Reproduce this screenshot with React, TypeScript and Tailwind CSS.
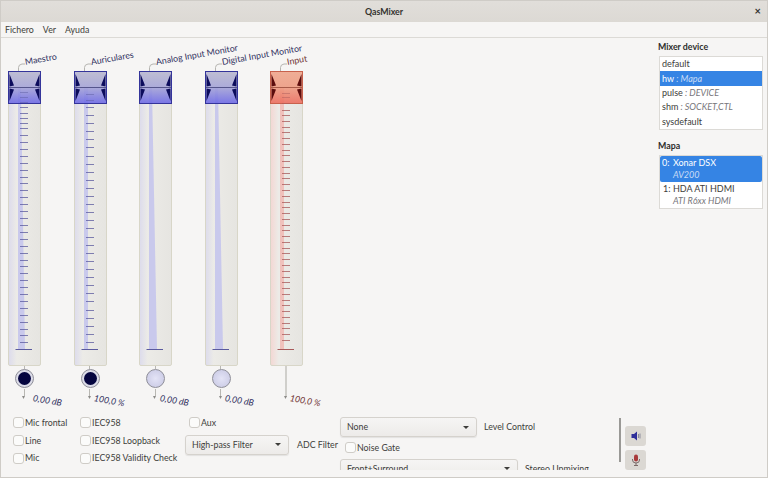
const font = 'font-["Lato","Noto_Sans",sans-serif]';

type Channel = {
  name: string;
  value: string;
  red?: boolean;
  ticks?: number[];
  barTop: number;
  barBottom: number;
  muted: boolean;
  valueClass: string;
};

const rangeTicks = (from: number, to: number, step: number) => {
  const out: number[] = [];
  for (let y = from; y <= to; y += step) out.push(Math.round(y));
  return out;
};

const masterTicks = [
  92, 97, 102, 107, 113, 118, 123, 128, 135, 142, 149, 156, 163, 170, 177, 183, 190, 197, 204, 211, 218, 225, 232, 239,
  246, 253, 260, 266, 273, 280, 287, 294, 301, 308, 315, 322, 329, 335, 342,
];
const phoneTicks = [94, 100, ...rangeTicks(107, 342, 8.1)];
const inputTicks = [93, 97, 103, 110, ...rangeTicks(115, 342, 5.77)];

const channels: Channel[] = [
  { name: 'Maestro', value: '0,00 dB', ticks: masterTicks, barTop: 13, barBottom: 17, muted: true, valueClass: 'left-[25px]' },
  { name: 'Auriculares', value: '100,0 %', ticks: phoneTicks, barTop: 14, barBottom: 14, muted: true, valueClass: 'left-[20px]' },
  { name: 'Analog Input Monitor', value: '0,00 dB', barTop: 13, barBottom: 18, muted: false, valueClass: 'left-[21px]' },
  { name: 'Digital Input Monitor', value: '0,00 dB', barTop: 13, barBottom: 18, muted: false, valueClass: 'left-[20px]' },
  { name: 'Input', value: '100,0 %', red: true, ticks: inputTicks, barTop: 14, barBottom: 14, muted: false, valueClass: 'left-[20px]' },
];

function Handle({ red }: { red?: boolean }) {
  const dark = red ? '#5c0d0d' : '#0c0c5c';
  return (
    <svg width="33" height="33" viewBox="0 0 33 33" className="absolute -left-px -top-px">
      <defs>
        <linearGradient id={red ? 'hr' : 'hb'} x1="0" y1="0" x2="0" y2="1">
          <stop offset="0" stopColor={red ? '#f0a68c' : '#b9b8d0'} />
          <stop offset="0.5" stopColor={red ? '#ee9a80' : '#a3a2d8'} />
          <stop offset="1" stopColor={red ? '#ec6a5c' : '#6a66e6'} />
        </linearGradient>
      </defs>
      <rect
        x="0.5"
        y="0.5"
        width="32"
        height="32"
        fill={`url(#${red ? 'hr' : 'hb'})`}
        fillOpacity="0.88"
        stroke={red ? '#c8614c' : '#34349a'}
      />
      <path
        d="M1.5 3L6 14.5L1.5 15.5ZM1.5 17.5L6 18.5L1.5 30ZM31.5 3L27 14.5L31.5 15.5ZM31.5 17.5L27 18.5L31.5 30Z"
        fill={dark}
      />
      <path d="M1 16.5H32" stroke={red ? '#a85a48' : '#55558c'} strokeWidth="1" />
    </svg>
  );
}

function Fader({ ch }: { ch: Channel }) {
  const ink = ch.red ? '#a85a5a' : '#5a5a9e';
  return (
    <div
      className={`relative h-[295px] w-[33px] rounded-b-[2px] border border-[#d8d6c8] bg-gradient-to-r ${
        ch.red ? 'from-[#f3d8d4]' : 'from-[#dddcec]'
      } via-[#ecebe7] via-25% to-[#e6e5e1]`}
    >
      <svg width="33" height="295" viewBox="0 0 33 295" className="absolute -left-px -top-px">
        <path d={`M10 17H${ch.barTop}L${ch.barBottom} 278H10Z`} fill={ch.red ? '#f0c2bc' : '#c9c9ec'} />
      </svg>
      <Handle red={ch.red} />
      <svg width="33" height="295" viewBox="0 0 33 295" className="absolute -left-px -top-px">
        {ch.ticks?.map((t) => (
          <line
            key={t}
            x1="12"
            x2="20"
            y1={t - 71 + 0.5}
            y2={t - 71 + 0.5}
            stroke={ink}
            strokeWidth="1"
            opacity={t < 104 ? 0.45 : 0.75}
          />
        ))}
        <line x1="7.5" x2="24" y1="278.5" y2="278.5" stroke={ink} strokeWidth="1" />
      </svg>
    </div>
  );
}

function Knob({ ch }: { ch: Channel }) {
  if (ch.red) {
    return <div className="ml-[15px] h-[31px] w-[2px] bg-[#d0cfcb]" />;
  }
  return (
    <div className="relative flex h-[31px] w-[33px] justify-center">
      <div className="absolute left-[15.5px] top-0 h-[3px] w-px bg-[#b8b7b2]" />
      <div
        className={`mt-[3px] flex h-[19px] w-[19px] items-center justify-center rounded-full border border-[#8e8e98] ${
          ch.muted ? 'bg-[#dcdce8]' : 'bg-[radial-gradient(circle,#e4e4f6,#c6c6e2)]'
        }`}
      >
        {ch.muted && <div className="h-[13px] w-[13px] rounded-full bg-[#05053f]" />}
      </div>
      <div className="absolute left-[15.5px] top-[23px] h-[7px] w-px bg-[#b8b7b2]" />
    </div>
  );
}

function Strip({ ch }: { ch: Channel }) {
  const ink = ch.red ? 'text-[#6e3030]' : 'text-[#30305e]';
  return (
    <div className="relative w-[33px] shrink-0">
      {/* rotated caption with its little hook */}
      <svg width="12" height="12" viewBox="0 0 12 12" className="absolute left-[10px] top-[-10px]">
        <path d="M0.5 10V6.5Q0.5 3.5 4 3H7" fill="none" stroke="#b5b4b0" />
      </svg>
      <span className={`absolute left-[17px] top-[-15px] origin-left -rotate-[10deg] whitespace-nowrap text-[8.8px] leading-[12px] ${ink}`}>
        {ch.name}
      </span>
      <Fader ch={ch} />
      <Knob ch={ch} />
      <div className="relative h-[14px]">
        <svg width="6" height="4" viewBox="0 0 6 4" className="absolute left-[13px] top-[-1px]">
          <path d="M1 0H4L2.5 3Z" fill="#8c8b88" />
        </svg>
        <span className={`absolute top-[-5px] origin-left rotate-[10deg] whitespace-nowrap text-[8.8px] italic leading-[12px] ${ch.valueClass} ${ink}`}>
          {ch.value}
        </span>
      </div>
    </div>
  );
}

function Check({ label, className = '' }: { label: string; className?: string }) {
  return (
    <label className={`flex h-[17.7px] items-center whitespace-nowrap text-[#3d3d3a] ${className}`}>
      <span className="mr-px h-[11px] w-[11px] shrink-0 rounded-[3px] border border-[#cfccc7] bg-[#fbfbfa]" />
      {label}
    </label>
  );
}

function Combo({ label, className }: { label: string; className: string }) {
  return (
    <div
      className={`flex h-[20px] shrink-0 items-center justify-between rounded-[3px] border border-[#d5d2cd] bg-gradient-to-b from-[#f6f5f4] to-[#edebe9] pl-[6px] pr-[7px] text-[#3d3d3a] shadow-[0_1px_1px_rgba(0,0,0,0.08)] ${className}`}
    >
      {label}
      <span className="h-0 w-0 border-x-[3.5px] border-t-[3.5px] border-x-transparent border-t-[#3d3d3a]" />
    </div>
  );
}

function SpeakerIcon() {
  return (
    <svg width="10" height="10" viewBox="0 0 10 10">
      <path d="M0.5 3H3L6 0.5V9.5L3 7H0.5Z" fill="#2f2f9a" />
      <path d="M7.5 3V7M9 2.5V7.5" stroke="#8e8e9e" />
    </svg>
  );
}

function MicIcon() {
  return (
    <svg width="10" height="12" viewBox="0 0 10 12">
      <rect x="3" y="0.5" width="4" height="7" rx="2" fill="#a83a3a" />
      <path d="M1.5 5V6Q1.5 9 5 9Q8.5 9 8.5 6V5M5 9V11.5M3 11.5H7" fill="none" stroke="#7a6a68" />
    </svg>
  );
}

export default function App() {
  return (
    <div
      className={`flex h-[478px] w-[768px] flex-col overflow-hidden border border-[#cfccc7] bg-[#f6f5f4] text-[8.8px] leading-[12px] ${font}`}
    >
      {/* Title bar */}
      <div className="relative flex h-[21px] shrink-0 items-center justify-center bg-gradient-to-b from-[#e1deda] to-[#dcd9d4] font-bold text-[#33322f]">
        QasMixer
        <span className="absolute right-[6px] top-[5px] text-[11px] leading-[10px]">×</span>
      </div>

      {/* Menu */}
      <div className="flex h-[16px] shrink-0 items-center gap-[9px] border-b border-[#dcdad6] pl-[4px] text-[#3d3d3a]">
        <span>Fichero</span>
        <span>Ver</span>
        <span>Ayuda</span>
      </div>

      <div className="flex min-h-0 flex-1">
        {/* Mixer area */}
        <div className="mb-[7px] min-w-0 flex-1 overflow-hidden pl-[7px] pt-[33px]">
          <div className="flex gap-[32.6px]">
            {channels.map((ch) => (
              <Strip key={ch.name} ch={ch} />
            ))}
          </div>

          <div className="mt-[3px] flex items-start">
            <div className="w-[72px] shrink-0 pl-[5px]">
              <Check label="Mic frontal" />
              <Check label="Line" />
              <Check label="Mic" />
            </div>
            <div className="w-[104px] shrink-0">
              <Check label="IEC958" />
              <Check label="IEC958 Loopback" />
              <Check label="IEC958 Validity Check" />
            </div>
            <div className="w-[156px] shrink-0">
              <Check label="Aux" className="pl-[5px]" />
              <div className="ml-px mt-[3px] flex items-center gap-[8px]">
                <Combo label="High-pass Filter" className="w-[104px]" />
                <span className="whitespace-nowrap text-[#3d3d3a]">ADC Filter</span>
              </div>
            </div>
            <div className="mt-[3px] w-[279px] shrink-0">
              <div className="flex items-center gap-[7px]">
                <Combo label="None" className="w-[137px]" />
                <span className="whitespace-nowrap text-[#3d3d3a]">Level Control</span>
              </div>
              <Check label="Noise Gate" className="mt-[2px] pl-[5px]" />
              <div className="mt-[2px] flex items-center gap-[7px]">
                <Combo label="Front+Surround" className="w-[178px]" />
                <span className="whitespace-nowrap text-[#3d3d3a]">Stereo Upmixing</span>
              </div>
            </div>
            <div className="mt-[4px] h-[44px] w-[2px] shrink-0 bg-[#9a9996]" />
            <div className="ml-[4px] mt-[12px] flex shrink-0 flex-col gap-[4px]">
              <button className="flex h-[20px] w-[21px] items-center justify-center rounded-[3px] bg-[#dbd8d3]">
                <SpeakerIcon />
              </button>
              <button className="flex h-[20px] w-[21px] items-center justify-center rounded-[3px] bg-[#dbd8d3]">
                <MicIcon />
              </button>
            </div>
          </div>
        </div>

        {/* Device column */}
        <div className="w-[109px] shrink-0 pr-[4px] pt-[3px] text-[#3d3d3a]">
          <div className="h-[15px] font-bold text-[#2e2e2c]">Mixer device</div>
          <div className="ml-px border border-[#dcdad6] bg-white text-[9px]">
            <div className="flex h-[14.4px] items-center pl-[2px]">default</div>
            <div className="flex h-[14.4px] items-center bg-[#3584e4] pl-[2px] text-white">
              hw<i className="text-[#c9dcf6]">&nbsp;: Mapa</i>
            </div>
            <div className="flex h-[14.4px] items-center pl-[2px]">
              pulse<i className="text-[#77767b]">&nbsp;: DEVICE</i>
            </div>
            <div className="flex h-[14.4px] items-center pl-[2px]">
              shm<i className="text-[#77767b]">&nbsp;: SOCKET,CTL</i>
            </div>
            <div className="flex h-[14.4px] items-center pl-[2px]">sysdefault</div>
          </div>
          <div className="mb-[3px] mt-[10px] font-bold text-[#2e2e2c]">Mapa</div>
          <div className="ml-px border border-[#dcdad6] bg-white text-[9px]">
            <div className="h-[26px] rounded-[2px] bg-[#3584e4] pl-[2px] pt-px text-white">
              <div className="flex">
                <span className="w-[11px]">0:</span>
                Xonar DSX
              </div>
              <div className="pl-[11px] italic text-[#c9dcf6]">AV200</div>
            </div>
            <div className="h-[26px] pl-[3px] pt-px">
              <div className="flex">
                <span className="w-[10px]">1:</span>
                HDA ATI HDMI
              </div>
              <div className="pl-[10px] italic text-[#77767b]">ATI R6xx HDMI</div>
            </div>
          </div>
        </div>
      </div>
    </div>
  );
}
